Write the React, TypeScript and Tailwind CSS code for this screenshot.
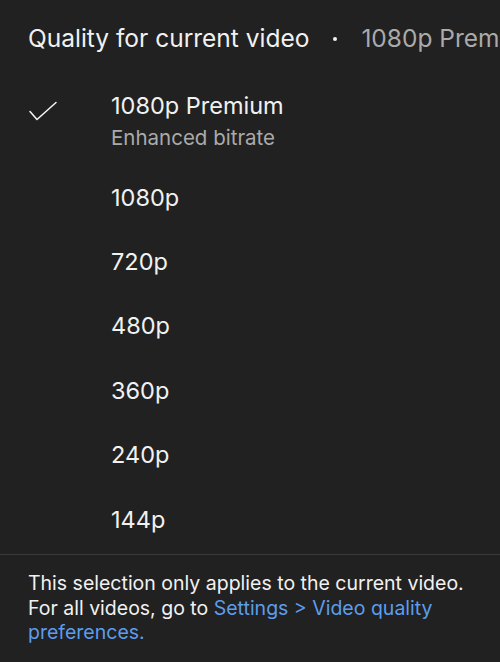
const OPTIONS = ["1080p", "720p", "480p", "360p", "240p", "144p"];

function Check() {
  return (
    <svg width="30" height="22" viewBox="0 0 30 22" fill="none" className="absolute left-[28px] top-[24px]">
      <path d="M2 10.5 L9 18.5 L28 1.5" stroke="#f1f1f1" strokeWidth="1.6" strokeLinecap="round" strokeLinejoin="round" />
    </svg>
  );
}

export default function App() {
  return (
    <div
      className="w-[500px] h-[662px] bg-[#212121] text-[#f1f1f1] overflow-hidden flex flex-col"
      style={{ fontFamily: "Inter, 'Noto Sans', sans-serif" }}
    >
      {/* Header */}
      <div className="h-[77px] flex items-center pl-[28px] whitespace-nowrap text-[24.5px]">
        <span>Quality for current video</span>
        <span className="mx-[24px] w-[4px] h-[4px] rounded-full bg-[#f1f1f1] shrink-0" />
        <span className="text-[#aaaaaa]">1080p Premium</span>
      </div>

      {/* Selected option */}
      <div className="relative pl-[111px] pt-[13px] h-[88px]">
        <Check />
        <div className="text-[23.5px] leading-[32px]">1080p Premium</div>
        <div className="text-[20.5px] leading-[32px] text-[#aaaaaa]">Enhanced bitrate</div>
      </div>

      {OPTIONS.map((o) => (
        <div key={o} className="h-[64.4px] flex items-center pl-[111px] text-[23.5px]">
          {o}
        </div>
      ))}

      <div className="mt-[3px] h-px bg-[#3a3a3a]" />

      <p className="px-[28px] pt-[16px] text-[19.5px] leading-[24.5px] text-[#f1f1f1]">
        This selection only applies to the current video. For all videos, go to{" "}
        <span className="text-[#5c9ded]">Settings &gt; Video quality preferences.</span>
      </p>
    </div>
  );
}
